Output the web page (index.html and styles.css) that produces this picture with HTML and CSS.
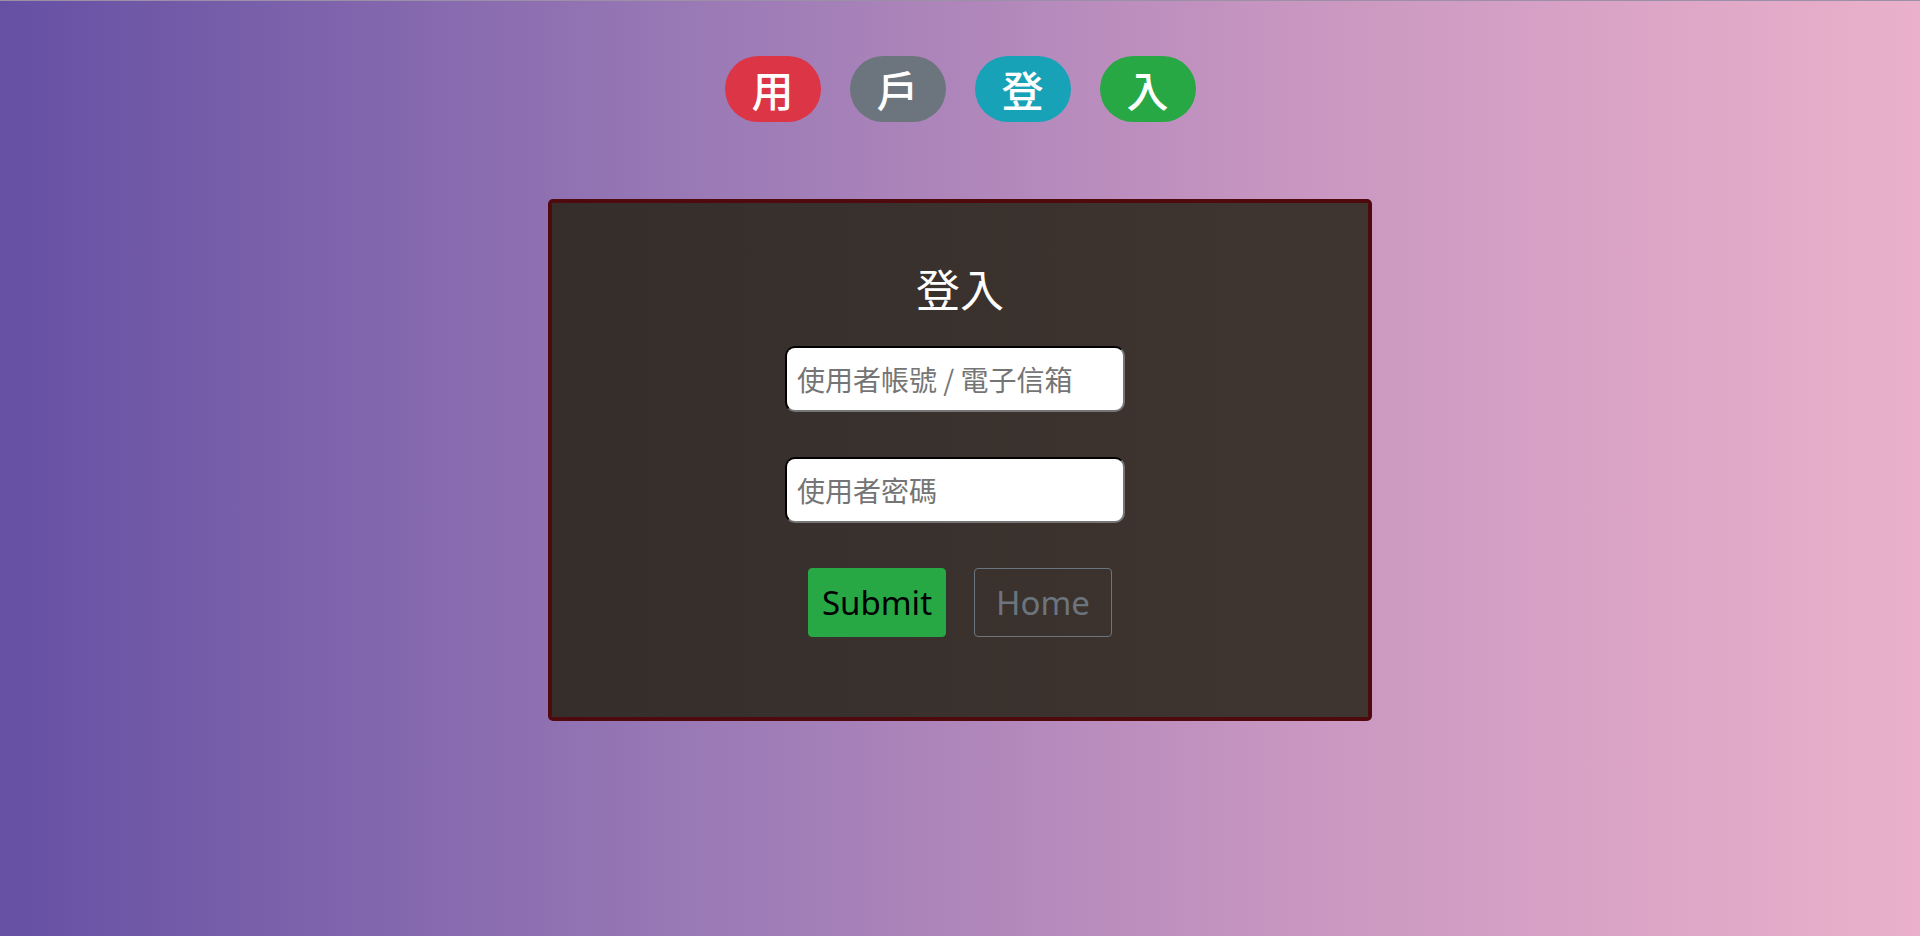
FILE: index.html
```html
<!DOCTYPE html>
<html lang="zh-Hant">
<head>
<meta charset="utf-8">
<title>登入</title>
<link rel="stylesheet" href="styles.css">
</head>
<body>
<div class="page">
  <div class="badges">
    <span class="badge badge-danger">用</span>
    <span class="badge badge-secondary">戶</span>
    <span class="badge badge-info">登</span>
    <span class="badge badge-success">入</span>
  </div>
  <div class="card">
    <h2 class="title">登入</h2>
    <form class="form">
      <input class="field" type="text" placeholder="使用者帳號 / 電子信箱">
      <input class="field" type="password" placeholder="使用者密碼">
      <div class="actions">
        <button type="button" class="btn btn-submit">Submit</button>
        <button type="button" class="btn btn-home">Home</button>
      </div>
    </form>
  </div>
</div>
</body>
</html>
```
FILE: styles.css
```css
html, body {
  margin: 0;
  padding: 0;
}
body {
  min-height: 936px;
  background: linear-gradient(to right, #6650a4 0%, #9878b5 35%, #c594c0 65%, #ebb1cb 100%);
  font-family: "Noto Sans", "Noto Sans CJK TC", sans-serif;
  border-top: 1px solid #9c90a8;
  box-sizing: border-box;
}
.page {
  display: flex;
  flex-direction: column;
  align-items: center;
  padding-top: 55px;
}
.badges {
  display: flex;
  gap: 29px;
}
.badge {
  display: flex;
  align-items: center;
  justify-content: center;
  width: 96px;
  height: 66px;
  border-radius: 33px;
  color: #fff;
  font-family: "Noto Sans CJK TC", sans-serif;
  font-size: 42px;
  font-weight: 500;
  line-height: 1;
}
.badge-danger { background: #dc3545; }
.badge-secondary { background: #6c757d; }
.badge-info { background: #17a2b8; }
.badge-success { background: #28a745; }

.card {
  margin-top: 77px;
  width: 824px;
  height: 522px;
  box-sizing: border-box;
  border: 4px solid #4f0a0d;
  border-radius: 5px;
  background: linear-gradient(to right, #352e2b, #3f3530);
  display: flex;
  flex-direction: column;
  align-items: center;
  padding-top: 60px;
}
.title {
  margin: 0;
  height: 50px;
  line-height: 50px;
  color: #fff;
  font-family: "Noto Sans CJK TC", sans-serif;
  font-size: 44px;
  font-weight: 400;
}
.form {
  display: flex;
  flex-direction: column;
  align-items: center;
  margin-top: 33px;
}
.field {
  width: 340px;
  height: 66px;
  box-sizing: border-box;
  border: 2px inset #767676;
  border-top-color: #1f1f1f;
  border-left-color: #2a2a2a;
  border-radius: 10px;
  background: #fff;
  padding: 0 10px;
  font-family: "Noto Sans CJK TC", sans-serif;
  font-size: 28px;
  color: #333;
  outline: none;
  margin-right: 10px;
  margin-bottom: 45px;
}
.field::placeholder {
  color: #757575;
}
.actions {
  display: flex;
  gap: 28px;
}
.btn {
  width: 138px;
  height: 69px;
  box-sizing: border-box;
  border-radius: 4px;
  font-family: "Noto Sans", sans-serif;
  font-size: 33px;
  padding: 0;
  display: flex;
  align-items: center;
  justify-content: center;
  cursor: pointer;
}
.btn-submit {
  background: #28a745;
  border: 1px solid #28a745;
  color: #000;
}
.btn-home {
  background: transparent;
  border: 1px solid #6c757d;
  color: #6c757d;
}
```
